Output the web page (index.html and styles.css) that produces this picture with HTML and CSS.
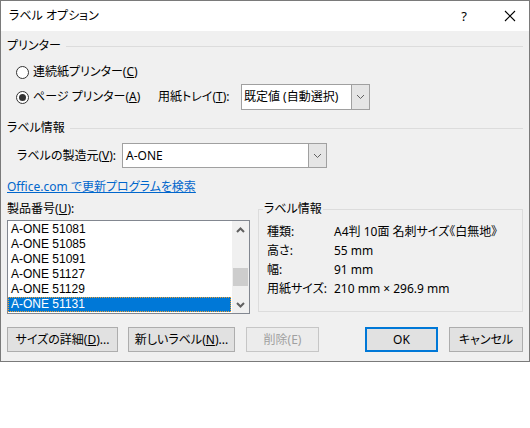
FILE: index.html
```html
<!DOCTYPE html>
<html lang="ja">
<head>
<meta charset="utf-8">
<title>ラベル オプション</title>
<link rel="stylesheet" href="styles.css">
</head>
<body>
<div class="dialog">
  <div class="titlebar">
    <span class="title">ラベル オプション</span>
    <span class="help">?</span>
    <span class="close"><svg width="12" height="12" viewBox="0 0 12 12"><path d="M1 1 L11 11 M11 1 L1 11" stroke="#000" stroke-width="1.1" fill="none"/></svg></span>
  </div>
  <div class="content">
    <div class="group-head head-printer"><span>プリンター</span><i class="rule"></i></div>
    <div class="radio-row row-cont">
      <span class="radio"></span><span class="radio-text">連続紙プリンター(<u>C</u>)</span>
    </div>
    <div class="radio-row row-page">
      <span class="radio checked"></span><span class="radio-text">ページ プリンター(<u>A</u>)</span>
      <span class="tray-label">用紙トレイ(<u>T</u>):</span>
      <div class="combo tray">
        <span class="combo-text">既定値 (自動選択)</span>
        <span class="combo-btn"><svg width="9" height="6" viewBox="0 0 9 6"><path d="M1 1 L4.5 4.5 L8 1" stroke="#606060" stroke-width="1" fill="none"/></svg></span>
      </div>
    </div>
    <div class="group-head head-label"><span>ラベル情報</span><i class="rule"></i></div>
    <div class="maker-row">
      <span class="maker-label">ラベルの製造元(<u>V</u>):</span>
      <div class="combo maker">
        <span class="combo-text">A-ONE</span>
        <span class="combo-btn"><svg width="9" height="6" viewBox="0 0 9 6"><path d="M1 1 L4.5 4.5 L8 1" stroke="#606060" stroke-width="1" fill="none"/></svg></span>
      </div>
    </div>
    <div class="link-row"><a class="link" href="#">Office.com で更新プログラムを検索</a></div>
    <div class="lower">
      <div class="left-col">
        <div class="list-label">製品番号(<u>U</u>):</div>
        <div class="listbox">
          <ul class="items">
            <li>A-ONE 51081</li>
            <li>A-ONE 51085</li>
            <li>A-ONE 51091</li>
            <li>A-ONE 51127</li>
            <li>A-ONE 51129</li>
            <li class="selected">A-ONE 51131</li>
          </ul>
          <div class="scrollbar">
            <span class="sb-btn"><svg width="9" height="6" viewBox="0 0 9 6"><path d="M1 5 L4.5 1.5 L8 5" stroke="#606060" stroke-width="2" fill="none"/></svg></span>
            <span class="sb-track"><span class="sb-thumb"></span></span>
            <span class="sb-btn"><svg width="9" height="6" viewBox="0 0 9 6"><path d="M1 1 L4.5 4.5 L8 1" stroke="#606060" stroke-width="2" fill="none"/></svg></span>
          </div>
        </div>
      </div>
      <fieldset class="info">
        <legend>ラベル情報</legend>
        <dl class="info-grid">
          <dt>種類:</dt><dd>A4判 10面 名刺サイズ《白無地》</dd>
          <dt>高さ:</dt><dd>55 mm</dd>
          <dt>幅:</dt><dd>91 mm</dd>
          <dt>用紙サイズ:</dt><dd>210 mm × 296.9 mm</dd>
        </dl>
      </fieldset>
    </div>
    <div class="buttons">
      <button class="btn b-size">サイズの詳細(<u>D</u>)...</button>
      <button class="btn b-new">新しいラベル(<u>N</u>)...</button>
      <button class="btn b-del" disabled>削除(E)</button>
      <span class="spacer"></span>
      <button class="btn b-ok">OK</button>
      <button class="btn b-cancel">キャンセル</button>
    </div>
  </div>
</div>
</body>
</html>
```
FILE: styles.css
```css
* { box-sizing: border-box; }
html, body { margin: 0; padding: 0; background: #fff; }
body {
  font-family: "Noto Sans", "Noto Sans CJK JP", sans-serif;
  font-size: 12px;
  color: #000;
  font-feature-settings: "palt";
}
u { text-decoration: underline; text-underline-offset: 1px; }

.dialog {
  width: 530px;
  height: 362px;
  border: 1px solid #7a7a7a;
  background: #f0f0f0;
  display: flex;
  flex-direction: column;
}

.titlebar {
  height: 30px;
  background: #fff;
  display: flex;
  align-items: center;
  padding-left: 8px;
  flex: none;
}
.title { flex: 1; line-height: 16px; }
.help { width: 14px; text-align: center; margin-right: 23px; font-size: 13px; line-height: 16px; }
.close { width: 32px; height: 30px; display: flex; align-items: center; justify-content: center; margin-right: 3px; }

.content {
  flex: 1;
  padding: 0 6px 0 6px;
  display: flex;
  flex-direction: column;
}

.group-head {
  height: 16px;
  display: flex;
  align-items: center;
  line-height: 16px;
}
.group-head .rule {
  flex: 1;
  height: 1px;
  background: #dcdcdc;
  margin-left: 5px;
}
.head-printer { margin-top: 7px; }
.head-label { margin-top: 10px; }

.radio-row {
  display: flex;
  align-items: center;
  line-height: 16px;
}
.row-cont { height: 16px; margin-top: 10px; }
.row-page { height: 26px; margin-top: 4px; }
.radio {
  width: 13px;
  height: 13px;
  border: 1px solid #333;
  border-radius: 50%;
  background: #fff;
  margin-left: 9px;
  margin-right: 4px;
  flex: none;
  display: flex;
  align-items: center;
  justify-content: center;
}
.radio.checked::after {
  content: "";
  width: 7px;
  height: 7px;
  border-radius: 50%;
  background: #333;
}
.row-page .radio-text { width: 125px; }
.tray-label { width: 83px; }

.combo {
  display: flex;
  background: #fff;
  border: 1px solid #a0a0a0;
}
.combo-text { flex: 1; line-height: 16px; align-self: center; }
.combo-btn {
  width: 18px;
  background: #e5e5e5;
  border-left: 1px solid #a0a0a0;
  display: flex;
  align-items: center;
  justify-content: center;
}
.tray { width: 129px; height: 26px; }
.tray .combo-text { padding-left: 2px; }
.maker { width: 205px; height: 25px; }
.maker .combo-text { padding-left: 3px; }

.maker-row {
  display: flex;
  align-items: center;
  height: 25px;
  margin-top: 7px;
  line-height: 16px;
}
.maker-label { width: 105px; margin-left: 10px; }

.link-row { height: 16px; margin-top: 11px; line-height: 16px; }
.link { color: #0066cc; text-decoration: underline; text-underline-offset: 1px; }

.lower {
  display: flex;
  align-items: flex-start;
  gap: 8px;
  margin-top: 6px;
}
.left-col { width: 243px; }
.list-label { height: 16px; line-height: 16px; }
.listbox {
  margin-top: 3px;
  height: 94px;
  border: 1px solid #828790;
  background: #fff;
  display: flex;
  padding: 1px 0 1px 0;
}
.items {
  list-style: none;
  margin: 0;
  padding: 0;
  flex: 1;
  font-family: "Liberation Sans", "Noto Sans", sans-serif;
}
.items li {
  height: 15px;
  line-height: 15px;
  padding-left: 3px;
  white-space: nowrap;
}
.items li.selected {
  background: #0078d7;
  color: #fff;
  outline: 1px dotted #f0a030;
  outline-offset: -1px;
}
.scrollbar {
  width: 17px;
  margin-top: -1px;
  margin-bottom: -1px;
  margin-left: 1px;
  background: #f0f0f0;
  display: flex;
  flex-direction: column;
}
.sb-btn {
  height: 17px;
  display: flex;
  align-items: center;
  justify-content: center;
  flex: none;
}
.sb-track { flex: 1; display: flex; flex-direction: column; justify-content: flex-end; padding: 0 1px 10px 1px; }
.sb-thumb { height: 18px; background: #cdcdcd; }

.info {
  width: 265px;
  margin: 0;
  border: 1px solid #dcdcdc;
  padding: 5px 4px 13px 4px;
  min-inline-size: 0;
}
.info legend {
  padding: 0 1px;
  line-height: 16px;
  height: 16px;
}
.info-grid {
  margin: 0 0 0 4px;
  display: grid;
  grid-template-columns: 67px auto;
}
.info-grid dt, .info-grid dd {
  margin: 0;
  height: 19px;
  line-height: 19px;
  white-space: nowrap;
}

.buttons {
  display: flex;
  margin-top: 13px;
  height: 25px;
}
.btn {
  font: inherit;
  font-feature-settings: "palt";
  color: #000;
  height: 25px;
  background: #e1e1e1;
  border: 1px solid #adadad;
  padding: 0;
  line-height: 16px;
}
.b-size { width: 111px; }
.b-new { width: 107px; margin-left: 10px; }
.b-del { width: 73px; margin-left: 11px; color: #a0a0a0; background: #ececec; border-color: #c6c6c6; }
.spacer { flex: 1; }
.b-ok { width: 73px; border: 2px solid #0078d7; }
.b-cancel { width: 74px; margin-left: 11px; }
```
